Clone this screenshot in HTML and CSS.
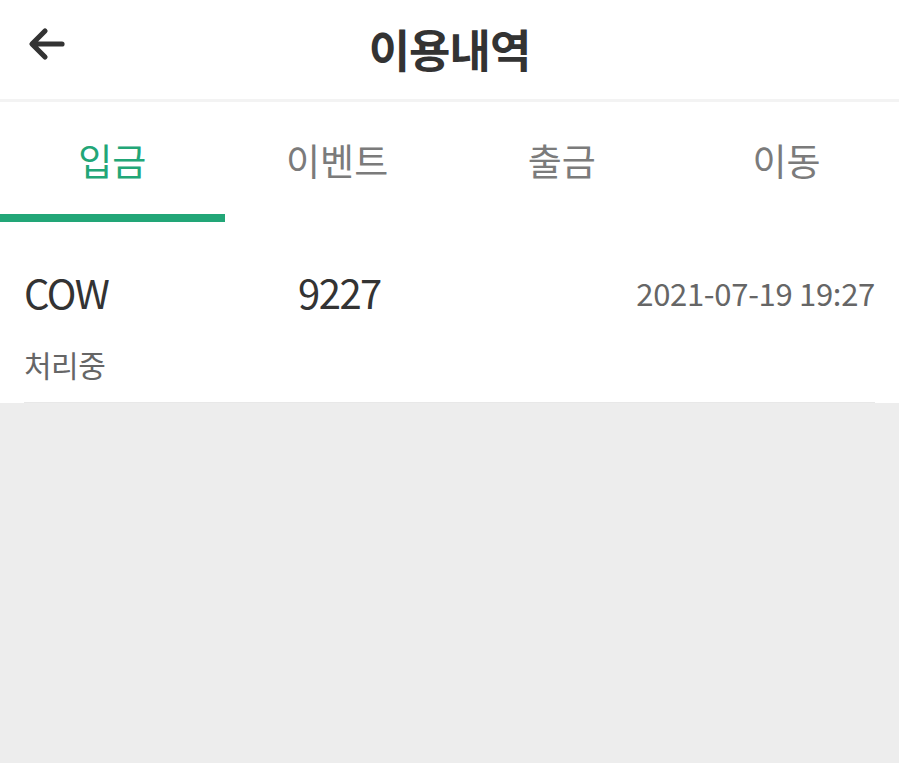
FILE: index.html
```html
<!DOCTYPE html>
<html>
<head>
  <meta charset="utf-8">
  <title>이용내역</title>
  <link rel="stylesheet" href="styles.css">
</head>
<body>
  <div class="header">
    <button class="back-btn" aria-label="뒤로">
      <svg viewBox="0 0 24 24" width="48" height="48">
        <path d="M20 12H5.5M11.5 5.5L5 12l6.5 6.5" fill="none" stroke="#333" stroke-width="2.6" stroke-linecap="round" stroke-linejoin="round"/>
      </svg>
    </button>
    <h1 class="title">이용내역</h1>
  </div>

  <div class="tabs">
    <div class="tab active">입금</div>
    <div class="tab">이벤트</div>
    <div class="tab">출금</div>
    <div class="tab">이동</div>
  </div>

  <div class="list">
    <div class="item">
      <div class="item-row">
        <span class="coin">COW</span>
        <span class="amount">9227</span>
        <span class="date">2021-07-19 19:27</span>
      </div>
      <div class="status">처리중</div>
    </div>
  </div>
</body>
</html>
```

FILE: styles.css
```css
html, body { margin: 0; padding: 0; }
body {
  background: #ededed;
  font-family: "Noto Sans CJK KR", "Noto Sans", sans-serif;
  color: #333;
  min-height: 763px;
}

.header {
  position: relative;
  height: 99px;
  background: white;
  border-bottom: 3px solid #f3f3f3;
  display: flex;
  align-items: center;
  justify-content: center;
}
.back-btn {
  position: absolute;
  left: 22px;
  top: 20px;
  padding: 0;
  border: none;
  background: none;
  width: 48px;
  height: 48px;
}
.back-btn svg { display: block; }
.title {
  margin: 0;
  margin-top: -2px;
  font-size: 45px;
  font-weight: 700;
  letter-spacing: -1px;
  color: #333;
}

.tabs {
  display: grid;
  grid-template-columns: repeat(4, 1fr);
  background: white;
  height: 120px;
}
.tab {
  display: flex;
  align-items: center;
  justify-content: center;
  padding-top: 4px;
  font-size: 37px;
  color: #7b7b7b;
  border-bottom: 8px solid transparent;
}
.tab.active {
  color: #22a677;
  border-bottom-color: #22a677;
}

.list { background: white; padding: 0 24px; }
.item {
  height: 181px;
  border-bottom: 1px solid #e8e8e8;
  box-sizing: border-box;
  display: flex;
  flex-direction: column;
}
.item-row {
  display: grid;
  grid-template-columns: 274px 1fr auto;
  align-items: center;
  height: 68px;
  margin-top: 36px;
}
.coin, .amount {
  font-size: 40px;
  letter-spacing: -1.5px;
  color: #333;
}
.date {
  font-size: 31px;
  letter-spacing: -0.3px;
  color: #666;
}
.status {
  margin-top: 16px;
  font-size: 30px;
  letter-spacing: -0.5px;
  color: #666;
}
```
